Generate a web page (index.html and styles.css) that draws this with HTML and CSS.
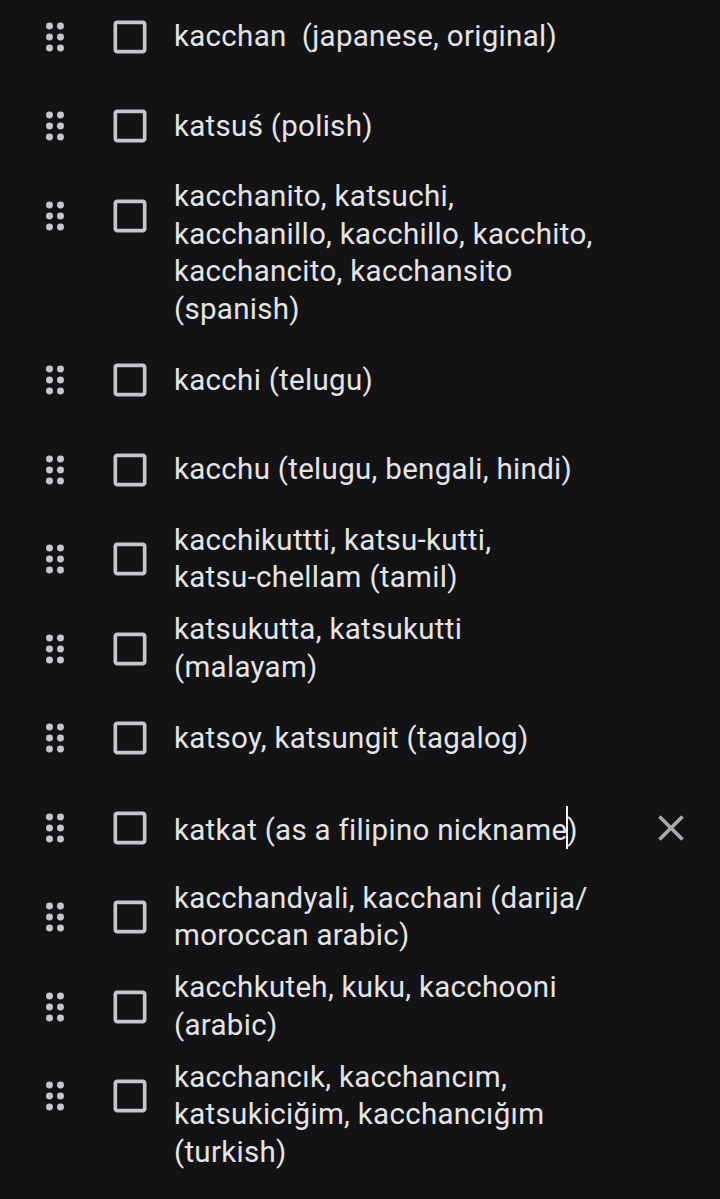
FILE: index.html
```html
<!DOCTYPE html>
<html>

<head>
    <link rel="stylesheet" href="styles.css">
</head>

<body>
    <!-- icones reutilizados -->
    <svg class="defs" width="0" height="0">
        <symbol id="drag" viewBox="0 0 24 24">
            <circle cx="9" cy="6" r="1.9" />
            <circle cx="15" cy="6" r="1.9" />
            <circle cx="9" cy="12" r="1.9" />
            <circle cx="15" cy="12" r="1.9" />
            <circle cx="9" cy="18" r="1.9" />
            <circle cx="15" cy="18" r="1.9" />
        </symbol>
        <symbol id="box" viewBox="0 0 24 24">
            <path d="M19 5v14H5V5h14m0-2H5c-1.1 0-2 .9-2 2v14c0 1.1.9 2 2 2h14c1.1 0 2-.9 2-2V5c0-1.1-.9-2-2-2z" />
        </symbol>
        <symbol id="close" viewBox="0 0 24 24">
            <path d="M19 6.41L17.59 5 12 10.59 6.41 5 5 6.41 10.59 12 5 17.59 6.41 19 12 13.41 17.59 19 19 17.59 13.41 12z" />
        </symbol>
    </svg>

    <ul class="list">
        <li class="item">
            <div class="controls">
                <svg class="handle"><use href="#drag" /></svg>
                <svg class="check"><use href="#box" /></svg>
            </div>
            <div class="text"><span>kacchan&nbsp; (japanese, original)</span></div>
        </li>
        <li class="item">
            <div class="controls">
                <svg class="handle"><use href="#drag" /></svg>
                <svg class="check"><use href="#box" /></svg>
            </div>
            <div class="text"><span>katsuś (polish)</span></div>
        </li>
        <li class="item">
            <div class="controls">
                <svg class="handle"><use href="#drag" /></svg>
                <svg class="check"><use href="#box" /></svg>
            </div>
            <div class="text"><span>kacchanito, katsuchi, kacchanillo, kacchillo, kacchito, kacchancito, kacchansito (spanish)</span></div>
        </li>
        <li class="item">
            <div class="controls">
                <svg class="handle"><use href="#drag" /></svg>
                <svg class="check"><use href="#box" /></svg>
            </div>
            <div class="text"><span>kacchi (telugu)</span></div>
        </li>
        <li class="item">
            <div class="controls">
                <svg class="handle"><use href="#drag" /></svg>
                <svg class="check"><use href="#box" /></svg>
            </div>
            <div class="text"><span>kacchu (telugu, bengali, hindi)</span></div>
        </li>
        <li class="item">
            <div class="controls">
                <svg class="handle"><use href="#drag" /></svg>
                <svg class="check"><use href="#box" /></svg>
            </div>
            <div class="text"><span>kacchikuttti, <span class="nowrap">katsu-kutti,</span> <span class="nowrap">katsu-chellam</span> (tamil)</span></div>
        </li>
        <li class="item">
            <div class="controls">
                <svg class="handle"><use href="#drag" /></svg>
                <svg class="check"><use href="#box" /></svg>
            </div>
            <div class="text"><span>katsukutta, katsukutti (malayam)</span></div>
        </li>
        <li class="item">
            <div class="controls">
                <svg class="handle"><use href="#drag" /></svg>
                <svg class="check"><use href="#box" /></svg>
            </div>
            <div class="text"><span>katsoy, katsungit (tagalog)</span></div>
        </li>
        <!-- item em edicao -->
        <li class="item">
            <div class="controls">
                <svg class="handle"><use href="#drag" /></svg>
                <svg class="check"><use href="#box" /></svg>
            </div>
            <div class="text"><span>katkat (as a filipino nickname<i class="caret"></i>)</span></div>
            <div class="remove">
                <svg class="x"><use href="#close" /></svg>
            </div>
        </li>
        <li class="item">
            <div class="controls">
                <svg class="handle"><use href="#drag" /></svg>
                <svg class="check"><use href="#box" /></svg>
            </div>
            <div class="text"><span>kacchandyali, kacchani (darija/ moroccan arabic)</span></div>
        </li>
        <li class="item">
            <div class="controls">
                <svg class="handle"><use href="#drag" /></svg>
                <svg class="check"><use href="#box" /></svg>
            </div>
            <div class="text"><span>kacchkuteh, kuku, kacchooni (arabic)</span></div>
        </li>
        <li class="item">
            <div class="controls">
                <svg class="handle"><use href="#drag" /></svg>
                <svg class="check"><use href="#box" /></svg>
            </div>
            <div class="text"><span>kacchancık, kacchancım, katsukiciğim, kacchancığım (turkish)</span></div>
        </li>
    </ul>
</body>

</html>
```

FILE: styles.css
```css
body {
    margin: 0;
    background-color: #131316;
    color: #e4e4e6;
    font-family: Roboto, "Noto Sans", sans-serif;
}

.defs {
    position: absolute;
}

.list {
    list-style: none;
    margin: -8px 0 0 0;
    padding: 0 27px 0 33px;
}

.item {
    display: flex;
    align-items: flex-start;
    padding: 7.25px 0;
}

.controls {
    display: flex;
    align-items: center;
    gap: 31px;
    height: 75px;
}

.handle,
.check {
    width: 44px;
    height: 44px;
    fill: #c6c6cb;
}

.text {
    width: 422px;
    min-height: 75px;
    margin-left: 22px;
    display: flex;
    align-items: center;
    font-size: 29.5px;
    letter-spacing: 0.3px;
    line-height: 37.5px;
}

.nowrap {
    white-space: nowrap;
}

.caret {
    display: inline-block;
    width: 2px;
    height: 43px;
    margin: 0 -1px;
    vertical-align: -9px;
    background-color: #f2f2f2;
}

.remove {
    margin-left: auto;
    height: 75px;
    display: flex;
    align-items: center;
}

.x {
    width: 44px;
    height: 44px;
    fill: #a9a9ad;
}
```
